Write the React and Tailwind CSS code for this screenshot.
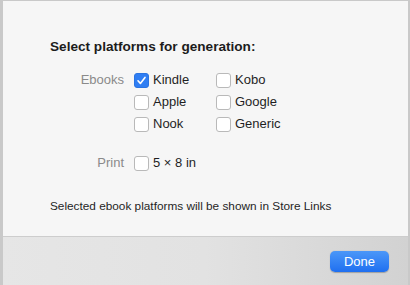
import React, { useState } from 'react';

const Check = ({ checked, label, onToggle }) => (
    <button onClick={onToggle} className="flex items-center gap-[4px] h-[22px] text-left">
        <span
            className={`w-[15px] h-[15px] rounded-[3px] flex items-center justify-center ${
                checked ? 'bg-[#2f7ef3] border border-[#2a74e2]' : 'bg-white border border-[#b9b9b9]'
            }`}
        >
            {checked && (
                <svg width="11" height="11" viewBox="0 0 11 11" fill="none">
                    <path d="M2 5.8 L4.4 8.4 L9 2.4" stroke="white" strokeWidth="1.6" strokeLinecap="round" strokeLinejoin="round" />
                </svg>
            )}
        </span>
        <span className="text-[13px] text-[#1f1f1f]">{label}</span>
    </button>
);

const App = () => {
    const [sel, setSel] = useState({ Kindle: true });
    const toggle = (k) => setSel((s) => ({ ...s, [k]: !s[k] }));

    const ebookRows = [
        ['Kindle', 'Kobo'],
        ['Apple', 'Google'],
        ['Nook', 'Generic'],
    ];

    return (
        <div
            className="w-[410px] h-[285px] flex flex-col border-l-[3px] border-r-2 border-t border-[#c9c9c9] overflow-hidden"
            style={{ fontFamily: '"Liberation Sans", Arial, sans-serif' }}
        >
            <div className="h-[236px] bg-[#f6f6f6] pl-[47px] pt-[38px] border-b border-[#cdcdcd]">
                <h2 className="text-[13.6px] font-bold leading-[16px] text-[#1c1c1c]">Select platforms for generation:</h2>

                <div className="flex mt-[14px]">
                    <div className="w-[74px] text-right text-[13px] text-[#8a8a8a] leading-[22px]">Ebooks</div>
                    <div className="ml-[10px] flex flex-col">
                        {ebookRows.map(([a, b]) => (
                            <div key={a} className="flex">
                                <div className="w-[82px]">
                                    <Check label={a} checked={!!sel[a]} onToggle={() => toggle(a)} />
                                </div>
                                <Check label={b} checked={!!sel[b]} onToggle={() => toggle(b)} />
                            </div>
                        ))}
                    </div>
                </div>

                <div className="flex mt-[17px]">
                    <div className="w-[74px] text-right text-[13px] text-[#8a8a8a] leading-[22px]">Print</div>
                    <div className="ml-[10px]">
                        <Check label="5 × 8 in" checked={!!sel.print} onToggle={() => toggle('print')} />
                    </div>
                </div>

                <p className="mt-[25px] text-[11.8px] leading-[14px] text-[#1f1f1f]">
                    Selected ebook platforms will be shown in Store Links
                </p>
            </div>

            <div className="flex-1 bg-gradient-to-r from-[#e6e6e6] via-[#e2e2e2] to-[#d2d2d2] flex justify-end items-start pt-[14px] pr-[19px]">
                <button className="w-[59px] h-[21px] rounded-[5px] bg-gradient-to-b from-[#4b97f8] to-[#1f6ff0] text-white text-[13px] leading-[21px] shadow-[0_0.5px_1px_rgba(0,0,0,0.25)]">
                    Done
                </button>
            </div>
        </div>
    );
};

export default App;
